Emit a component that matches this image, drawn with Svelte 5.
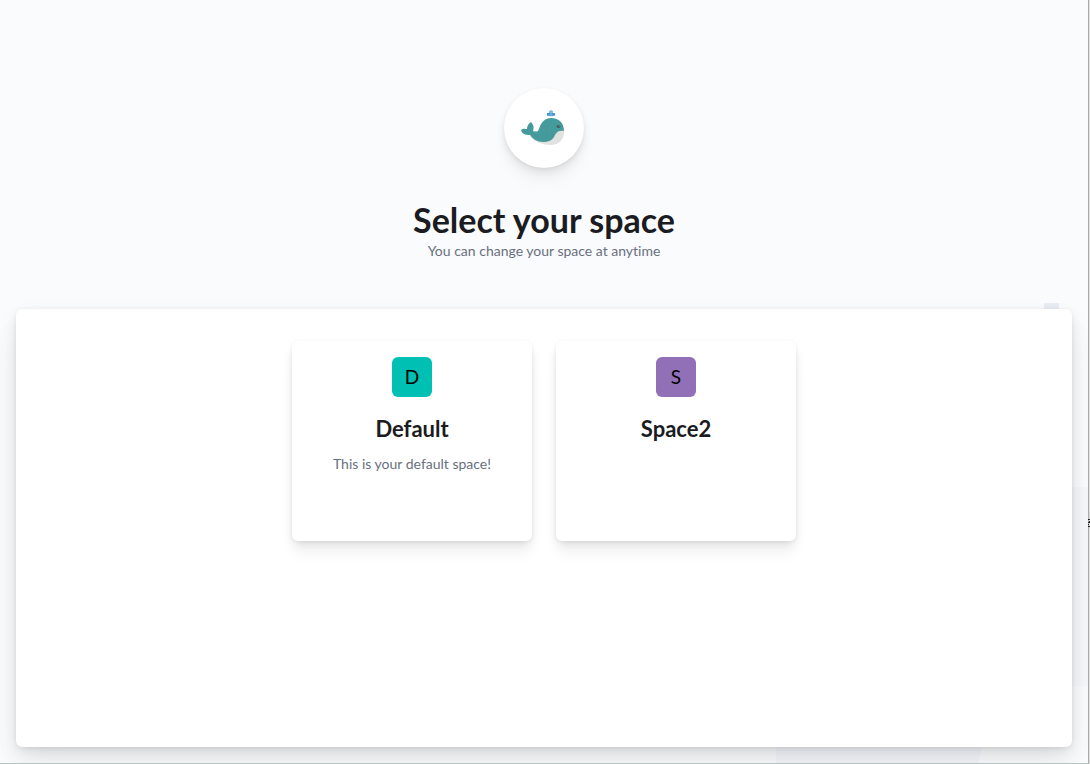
<script lang="ts">
  const spaces = [
    { name: 'Default', initial: 'D', color: '#00bfb3', description: 'This is your default space!' },
    { name: 'Space2', initial: 'S', color: '#9170b8', description: '' }
  ];
</script>

<div class="frame">
  <main class="page">
    <svg class="backdrop top" viewBox="0 0 15 15" aria-hidden="true"><path d="M0 0h15v15H0z" fill="#e8edf3" /></svg>
    <svg class="backdrop side" viewBox="0 0 200 200" aria-hidden="true"><path d="M0 0h200v200L0 199z" fill="#f5f7fb" /></svg>
    <svg class="backdrop bottom" viewBox="0 0 206 60" aria-hidden="true"><path d="M0 0h206v24L198 60H0z" fill="#f5f6fb" /></svg>

    <header class="heading">
      <div class="logo">
        <svg viewBox="0 0 48 40" role="img" aria-label="Whale">
          <path d="M10 28c5 6 13 9 21 9 8 0 13-6 13-13l-1-3-8 1-14 8z" fill="#e1e1e1" />
          <path d="M1 22c2-2 4-1 6-1 0-3 1-5 4-7 3 3 3 6 2 9 3 1 5 1 6-2 2-7 6-11 12-11 8 0 13 5 13 13-4-1-7 0-9 4-2 5-6 7-12 7-6 0-10-3-13-7-5 0-8-1-9-5z" fill="#459a9b" />
          <path d="M27 23c-2 4-2 7 0 10M27 33c4-1 6-4 5-8" fill="none" stroke="#3e9495" stroke-width=".6" />
          <ellipse cx="38.5" cy="18.5" rx="1.9" ry="1.4" fill="#46565d" />
          <circle cx="39" cy="18" r=".6" fill="#99a8ac" />
          <path d="M27 5h8v3h-8z" fill="#64aee0" />
          <path d="M29 3l2-1 2 1v2h-4z" fill="#80bce4" />
          <path d="M27 5h3v2h-3zM32 5h3v2h-3z" fill="#4798d2" />
          <path d="M29 8h4v1h-4z" fill="#d5eaf6" />
        </svg>
      </div>
      <h1>Select your space</h1>
      <p>You can change your space at anytime</p>
    </header>

    <section class="panel" aria-label="Spaces">
      {#each spaces as space}
        <button class="card" type="button">
          <span class="avatar" style="background-color: {space.color}">{space.initial}</span>
          <span class="name">{space.name}</span>
          <span class="description">{space.description}</span>
        </button>
      {/each}
    </section>
  </main>
  <svg class="edge-mark" viewBox="0 0 2 8" aria-hidden="true"><path d="M0 0h2v1H0zM1 2h1v1H1zM0 3h2v1H0zM0 5h1v1H0zM0 7h2v1H0z" fill="#222" /></svg>
</div>

<style>
  :global(body) { margin: 0; background: #dcdcdc; }
  .frame { position: relative; padding-right: 1px; }
  .page {
    position: relative;
    box-sizing: border-box;
    min-height: 100vh;
    padding: 88px 16px 16px;
    display: flex;
    flex-direction: column;
    overflow: hidden;
    background: #fafbfd;
    border-right: 1px solid #aaa;
    border-bottom: 1px solid #b8c4c4;
    font-family: Lato, sans-serif;
    font-variant-ligatures: none;
    font-kerning: normal;
    color: #1a1c21;
  }
  .backdrop { position: absolute; }
  .top { right: 29px; top: 303px; width: 15px; height: 15px; }
  .side { right: -184px; top: 487px; width: 200px; height: 200px; }
  .bottom { right: 106px; bottom: -20px; width: 206px; height: 60px; }
  .edge-mark { position: absolute; right: 0; top: 519px; width: 2px; height: 8px; }
  .heading { display: flex; flex-direction: column; align-items: center; text-align: center; }
  .logo, .card {
    box-shadow: 0 1px 4px -1px rgba(0, 0, 0, .08), 0 3px 8px -1px rgba(0, 0, 0, .06), 0 6px 12px -1px rgba(0, 0, 0, .05), 0 15px 15px -1px rgba(0, 0, 0, .04);
  }
  .logo {
    position: relative;
    width: 80px;
    height: 80px;
    display: flex;
    align-items: center;
    justify-content: center;
    border-radius: 50%;
    background: #fff;
  }
  .logo svg { width: 48px; height: 40px; }
  h1 { margin: 32px 0 0; font-size: 34px; line-height: 40px; font-weight: 700; }
  p { margin: 0; font-size: 14px; line-height: 21px; color: #69707d; }
  .panel {
    position: relative;
    flex: 1;
    margin-top: 48px;
    padding: 32px;
    display: flex;
    flex-wrap: wrap;
    justify-content: center;
    align-content: flex-start;
    gap: 24px;
    border-radius: 6px;
    background: #fff;
    box-shadow: 0 1px 5px -1px rgba(0, 0, 0, .1), 0 4px 13px -1px rgba(0, 0, 0, .07), 0 8px 23px -1px rgba(0, 0, 0, .06), 0 23px 35px -1px rgba(0, 0, 0, .05);
  }
  .card {
    box-sizing: border-box;
    width: 240px;
    min-height: 200px;
    padding: 16px;
    display: flex;
    flex-direction: column;
    align-items: center;
    border: 0;
    border-radius: 6px;
    background: #fff;
    font: inherit;
    font-variant-ligatures: none;
    cursor: pointer;
  }
  .avatar {
    width: 40px;
    height: 40px;
    border-radius: 6px;
    font-size: 19px;
    line-height: 40px;
    text-align: center;
    color: #000;
  }
  .name { margin-top: 16px; font-size: 22px; line-height: 32px; font-weight: 700; color: #1a1c21; }
  .description { margin-top: 8px; font-size: 14px; line-height: 21px; color: #69707d; }
</style>
